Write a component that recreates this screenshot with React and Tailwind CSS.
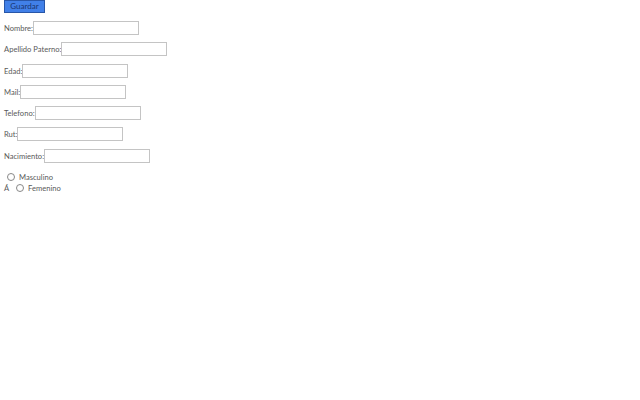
import React from "react";

const fields = [
  "Nombre",
  "Apellido Paterno",
  "Edad",
  "Mail",
  "Telefono",
  "Rut",
  "Nacimiento",
];

function Radio() {
  return (
    <span className="inline-block w-[8px] h-[8px] rounded-full border border-[#888] bg-white" />
  );
}

export default function App() {
  return (
    <div
      className="w-[640px] h-[400px] bg-white text-[7.6px] leading-[10px] text-[#5a5a5a] font-normal"
      style={{ fontFamily: 'Lato, "Open Sans", sans-serif' }}
    >
      <div className="pl-[4px]">
        <button className="w-[41px] h-[13px] bg-[#4180e8] border border-[#2856a8] text-[#1a3570] text-[8px] leading-[11px] flex items-center justify-center">
          Guardar
        </button>
      </div>
      <div className="flex flex-col gap-[7.3px] mt-[8px] pl-[4px]">
        {fields.map((f) => (
          <div key={f} className="flex items-center h-[14px]">
            <span>{f}:</span>
            <span className="w-[106px] h-[14px] border border-[#c4c4c4] bg-white" />
          </div>
        ))}
      </div>
      <div className="mt-[10px] flex items-center h-[9px] pl-[7px] gap-[4px]">
        <Radio />
        <span>Masculino</span>
      </div>
      <div className="mt-[2px] flex items-center h-[9px] pl-[4px]">
        <span className="w-[12px]">Á</span>
        <Radio />
        <span className="ml-[4px]">Femenino</span>
      </div>
    </div>
  );
}
